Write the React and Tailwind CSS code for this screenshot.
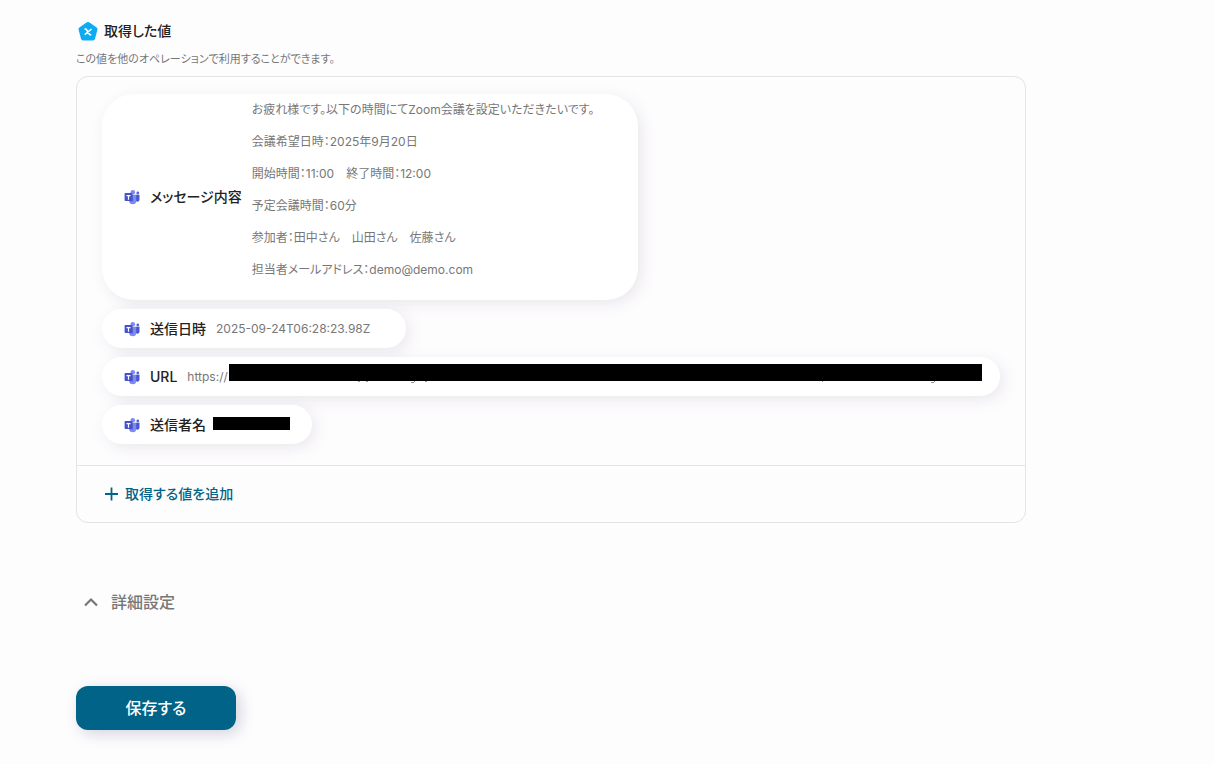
import React from 'react';

const TeamsIcon = () => (
  <svg viewBox="0 0 16 16" className="h-4 w-4 shrink-0" aria-hidden="true">
    <circle cx="13.8" cy="4" r="1.4" fill="#5563dc" />
    <path d="M11.5 5.8h4v4.8a2 2 0 0 1-2.4 2h-1.6z" fill="#4a58d0" />
    <circle cx="8.8" cy="3.2" r="2.3" fill="#7d8af0" />
    <path d="M5.2 5.8h7v6a3.5 3.5 0 0 1-7 0z" fill="#7d8af0" />
    <path d="M5.2 5.8h3.8v6.6H5.4z" fill="#3f4cc0" opacity="0.5" />
    <rect x="0.6" y="4" width="7.8" height="8" rx="0.8" fill="#4653c8" />
    <path d="M2.5 6h4v1.200H5.100v3.600H3.900V7.200H2.500z" fill="#ffffff" />
  </svg>
);

const ValueIcon = () => (
  <svg viewBox="0 0 20 20" className="h-5 w-5 shrink-0" aria-hidden="true">
    <path
      d="M10 3 17.5 8.200 15 17.500H5L2.500 8.200z"
      fill="#0cabf3"
      stroke="#0cabf3"
      strokeWidth="4"
      strokeLinejoin="round"
    />
    <path
      d="M6.500 8h1.500L11.800 13.700h1.500M13.500 8 6.700 13.700"
      fill="none"
      stroke="#ffffff"
      strokeWidth="1.6"
      strokeLinejoin="round"
    />
  </svg>
);

const messageLines = [
  'お疲れ様です。以下の時間にてZoom会議を設定いただきたいです。',
  '会議希望日時：2025年9月20日',
  '開始時間：11:00　終了時間：12:00',
  '予定会議時間：60分',
  '参加者：田中さん　山田さん　佐藤さん',
  '担当者メールアドレス：demo@demo.com',
];

const ValueChip = ({ label, className = '', children }) => (
  <li
    className={`flex max-w-full items-center bg-white pl-[22px] shadow-[4px_4px_16px_rgba(60,40,80,0.10)] ${className}`}
  >
    <TeamsIcon />
    <span className="ml-2.5 shrink-0 text-sm font-medium text-[#222]">{label}</span>
    {children}
  </li>
);

const App = () => (
  <main className="min-h-screen bg-[#fefdfe] pt-5 pr-8 pb-8 pl-[76px] font-['Inter','Noto_Sans_CJK_JP',sans-serif] text-[#777] [font-feature-settings:'palt']">
    <div className="max-w-[950px]">
      <h2 className="flex h-[22px] items-center gap-1.5 pl-0.5 text-sm font-medium text-[#222]">
        <ValueIcon />
        取得した値
      </h2>
      <p className="mt-2 text-[11px] leading-[18px]">この値を他のオペレーションで利用することができます。</p>

      {/* Output values */}
      <section className="mt-2 rounded-xl border border-[#e4e3e5]">
        <ul className="flex flex-col items-start gap-[9px] px-[25px] pt-[17px] pb-[21px] text-xs">
          <ValueChip label="メッセージ内容" className="rounded-[32px] pr-11">
            <div className="ml-2.5 space-y-3 pt-1.5 pb-5 leading-5">
              {messageLines.map((line) => (
                <p key={line}>{line}</p>
              ))}
            </div>
          </ValueChip>
          <ValueChip label="送信日時" className="h-[39px] rounded-full pr-9">
            <span className="ml-2.5">2025-09-24T06:28:23.98Z</span>
          </ValueChip>
          <ValueChip label="URL" className="h-[39px] w-full rounded-full pr-[18px]">
            <span className="ml-2.5">https://</span>
            <span className="relative mt-[7px] ml-px h-[17px] flex-1 self-start bg-black">
              {/* Descenders showing under the mask */}
              <svg viewBox="0 0 720 3" className="absolute top-full left-0 h-[3px] w-[720px]" aria-hidden="true">
                <path
                  d="M129 .5h2M137 .5h2M185 .5h1M182 1.5h3M196 .5h2M593 .5h1M705 .5h1M702 1.5h3"
                  stroke="#999999"
                  strokeWidth="1"
                />
              </svg>
            </span>
          </ValueChip>
          <ValueChip label="送信者名" className="h-[39px] rounded-full pr-[22px]">
            <span className="mb-0.5 ml-[7px] h-[13px] w-[77px] bg-black" />
          </ValueChip>
        </ul>
        <div className="border-t border-[#e4e3e5] px-[27px] py-[18px]">
          <button type="button" className="flex items-center gap-[7px] text-sm font-medium text-[#006387]">
            <svg viewBox="0 0 14 14" className="h-3.5 w-3.5" aria-hidden="true">
              <path d="M7.5 .5v13M1 7h13" stroke="currentColor" strokeWidth="1.8" />
            </svg>
            取得する値を追加
          </button>
        </div>
      </section>

      <button type="button" className="mt-[67px] ml-2 flex items-center gap-[13px] text-base font-medium">
        <svg viewBox="0 0 14 14" className="h-3.5 w-3.5" aria-hidden="true">
          <path d="M1 10.5 7 4.5l6 6" fill="none" stroke="currentColor" strokeWidth="2.2" />
        </svg>
        詳細設定
      </button>

      <button
        type="button"
        className="mt-[72px] block h-11 w-40 rounded-xl bg-[#006387] text-base font-medium text-white shadow-[4px_4px_16px_rgba(40,40,90,0.20)]"
      >
        保存する
      </button>
    </div>
  </main>
);

export default App;
